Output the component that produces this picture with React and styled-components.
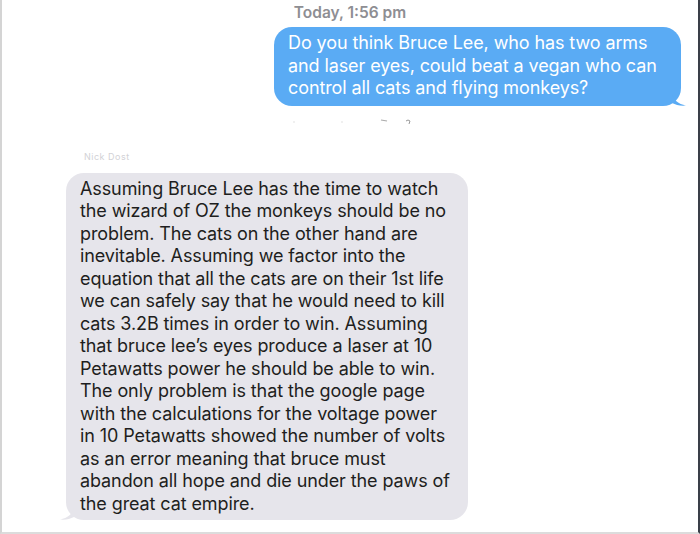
import React from "react";
import styled, { createGlobalStyle } from "styled-components";

const Global = createGlobalStyle`
  html, body { margin: 0; padding: 0; background: #fff; }
  body { font-family: Inter, "Liberation Sans", Arial, sans-serif; }
`;

const Frame = styled.div`
  width: 700px;
  height: 534px;
  box-sizing: border-box;
  border-left: 2px solid #d4d4d4;
  border-right: 2px solid #3a3f48;
  border-bottom: 2px solid #dcdcdc;
  background: #fff;
  display: flex;
  flex-direction: column;
  overflow: hidden;
`;

const Stamp = styled.div`
  text-align: center;
  margin-top: 4px;
  font-size: 15.5px;
  line-height: 18px;
  font-weight: 600;
  color: #8e8e93;
  padding-left: 0;
`;

const Row = styled.div`
  display: flex;
  justify-content: ${(p) => (p.$mine ? "flex-end" : "flex-start")};
  padding: ${(p) => (p.$mine ? "0 17px 0 0" : "0 0 0 64px")};
  margin-top: ${(p) => p.$top}px;
`;

const Bubble = styled.div`
  position: relative;
  width: ${(p) => p.$w}px;
  box-sizing: border-box;
  padding: 5px 14px ${(p) => (p.$mine ? 6 : 5)}px 14px;
  border-radius: 18px;
  background: ${(p) => (p.$mine ? "#5aabf4" : "#e6e5eb")};
  color: ${(p) => (p.$mine ? "#ffffff" : "#1e1e20")};
  font-size: 18px;
  line-height: 22.5px;
  letter-spacing: -0.1px;
`;

const Line = styled.span`
  display: block;
  white-space: nowrap;
`;

const Tail = styled.svg`
  position: absolute;
  bottom: 0;
  ${(p) => (p.$mine ? "right: -5px;" : "left: -6px;")}
`;

const Smudges = styled.svg`
  display: block;
  margin-top: 12px;
  margin-left: 280px;
`;

const Sender = styled.div`
  margin-top: 26px;
  padding-left: 82px;
  font-size: 9px;
  line-height: 10px;
  color: #d2d2d6;
  letter-spacing: 0.5px;
`;

const mine = [
  "Do you think Bruce Lee, who has two arms",
  "and laser eyes, could beat a vegan who can",
  "control all cats and flying monkeys?",
];

const theirs = [
  "Assuming Bruce Lee has the time to watch",
  "the wizard of OZ the monkeys should be no",
  "problem. The cats on the other hand are",
  "inevitable. Assuming we factor into the",
  "equation that all the cats are on their 1st life",
  "we can safely say that he would need to kill",
  "cats 3.2B times in order to win. Assuming",
  "that bruce lee’s eyes produce a laser at 10",
  "Petawatts power he should be able to win.",
  "The only problem is that the google page",
  "with the calculations for the voltage power",
  "in 10 Petawatts showed the number of volts",
  "as an error meaning that bruce must",
  "abandon all hope and die under the paws of",
  "the great cat empire.",
];

export default function App() {
  return (
    <>
      <Global />
      <Frame>
        <Stamp>Today, 1:56 pm</Stamp>
        <Row $mine $top={5}>
          <Bubble $mine $w={407}>
            {mine.map((l) => (
              <Line key={l}>{l}</Line>
            ))}
            <Tail $mine width="14" height="12" viewBox="0 0 14 12">
              <path d="M0 0 C2 6 6 10 14 11.5 C8 12 4 11 0 9 Z" fill="#5aabf4" />
            </Tail>
          </Bubble>
        </Row>
        <Smudges width="140" height="8" viewBox="0 0 140 8">
          <circle cx="12" cy="4" r="0.8" fill="#ddd" />
          <circle cx="60" cy="4" r="0.8" fill="#ddd" />
          <path d="M99 2 L105 3" stroke="#aaa" strokeWidth="1.2" />
          <path d="M124 3 Q126 1 128 3 L127 6" stroke="#999" strokeWidth="1" fill="none" />
        </Smudges>
        <Sender>Nick Dost</Sender>
        <Row $top={11}>
          <Bubble $w={402}>
            {theirs.map((l) => (
              <Line key={l}>{l}</Line>
            ))}
            <Tail width="14" height="12" viewBox="0 0 14 12">
              <path d="M14 0 C12 6 8 10 0 11.5 C6 12 10 11 14 9 Z" fill="#e6e5eb" />
            </Tail>
          </Bubble>
        </Row>
      </Frame>
    </>
  );
}
